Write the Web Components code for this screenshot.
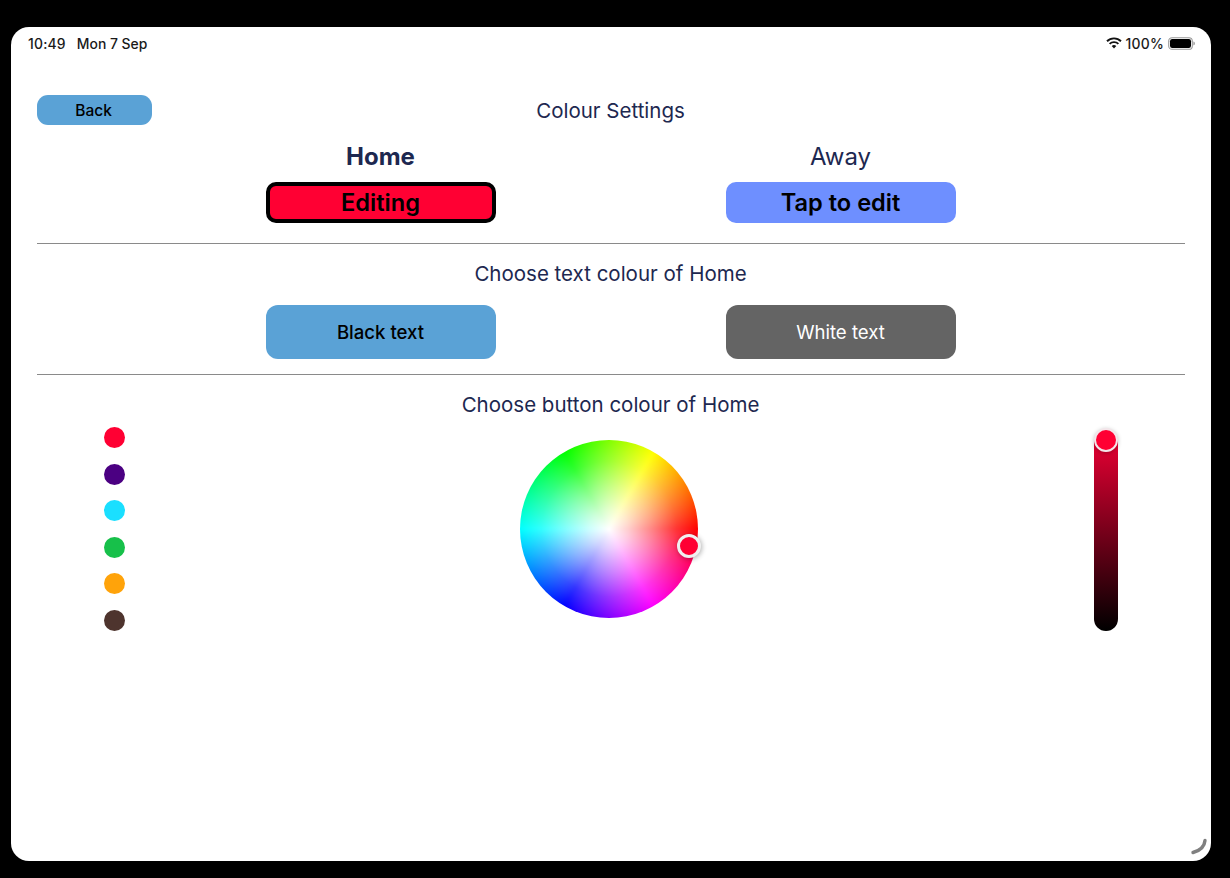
<!DOCTYPE html>
<html lang="en">
<head>
<meta charset="utf-8">
<title>Colour Settings</title>
<style>
  html, body { margin: 0; height: 100%; background: #000; }
  body { font-family: Inter, "Liberation Sans", sans-serif; color: #1d2850; }
</style>
</head>
<body>
<settings-screen>
  <status-bar slot="status"></status-bar>
  <screen-header slot="header">Colour Settings</screen-header>

  <team-row slot="teams">
    <team-column name="Home" selected>
      <app-button kind="editing">Editing</app-button>
    </team-column>
    <team-column name="Away">
      <app-button kind="away">Tap to edit</app-button>
    </team-column>
  </team-row>

  <section-title slot="text-title">Choose text colour of Home</section-title>
  <team-row slot="text-buttons">
    <app-button kind="black">Black text</app-button>
    <app-button kind="white">White text</app-button>
  </team-row>

  <section-title slot="colour-title">Choose button colour of Home</section-title>
  <colour-picker slot="picker"></colour-picker>
</settings-screen>

<script>
function defineEl(name, css, html, extra) {
    const tpl = document.createElement('template');
    tpl.innerHTML = `<style>${css}</style>${html}`;
    customElements.define(name, class extends HTMLElement {
        constructor() {
            super();
            this.attachShadow({ mode: 'open' }).appendChild(tpl.content.cloneNode(true));
        }
        connectedCallback() {
            if (extra) extra(this);
        }
    });
}

defineEl('settings-screen', `
    :host { display: block; padding: 27px 19px 17px 11px; }
    .device {
        position: relative;
        box-sizing: border-box;
        width: 1200px;
        height: 834px;
        background: #fff;
        border-radius: 18px;
        overflow: hidden;
    }
    .content { padding: 0 26px; }
    hr { border: 0; height: 1px; background: #8a8a8a; margin: 0; }
    .rule-1 { margin-top: 20px; }
    .rule-2 { margin-top: 15px; }
    .gap-a { height: 18px; }
    .resize { position: absolute; right: 0; bottom: 0; }
`, `
    <div class="device">
        <slot name="status"></slot>
        <div class="content">
            <slot name="header"></slot>
            <slot name="teams"></slot>
            <hr class="rule-1">
            <slot name="text-title"></slot>
            <div class="gap-a"></div>
            <slot name="text-buttons"></slot>
            <hr class="rule-2">
            <slot name="colour-title"></slot>
            <slot name="picker"></slot>
        </div>
        <svg class="resize" width="24" height="24" viewBox="0 0 24 24">
            <path d="M18 3.5C17.5 9.5 13.5 13.5 6 15.5" fill="none" stroke="#808080" stroke-width="3.4" stroke-linecap="round"/>
        </svg>
    </div>
`);

defineEl('status-bar', `
    :host {
        display: flex;
        justify-content: space-between;
        align-items: center;
        box-sizing: border-box;
        height: 32px;
        padding: 1px 15px 0 17px;
        font: 500 13.9px Inter, "Liberation Sans", sans-serif;
        color: #1a1a1a;
    }
    .left { display: flex; gap: 11px; }
    .left span:first-child { letter-spacing: .2px; }
    .right { display: flex; align-items: center; gap: 4px; }
    .right svg { margin-top: -1px; }
    .pct { letter-spacing: .25px; }
`, `
    <div class="left"><span>10:49</span><span>Mon 7 Sep</span></div>
    <div class="right">
        <svg width="16" height="12" viewBox="0 0 16 12">
            <path d="M1 4.2a10 10 0 0 1 14 0" fill="none" stroke="#111" stroke-width="1.9"/>
            <path d="M3.6 6.9a6.4 6.4 0 0 1 8.8 0" fill="none" stroke="#111" stroke-width="1.9"/>
            <path d="M8 11.4 5.7 9a3.3 3.3 0 0 1 4.6 0z" fill="#111"/>
        </svg>
        <span class="pct">100%</span>
        <svg width="28" height="13" viewBox="0 0 28 13">
            <rect x="0.7" y="0.7" width="23.6" height="11.6" rx="3.4" fill="none" stroke="#999" stroke-width="1.1"/>
            <rect x="2" y="2" width="21" height="9" rx="2.2" fill="#000"/>
            <path d="M25.4 4.6c1 .3 1.5 1 1.5 1.9s-.5 1.6-1.5 1.9z" fill="#999"/>
        </svg>
    </div>
`);

defineEl('screen-header', `
    :host {
        display: grid;
        grid-template-columns: 115px 1fr 115px;
        align-items: center;
        margin: 36px 0 0 -.5px;
        height: 30px;
    }
    .title { text-align: center; padding-right: .5px; font: 400 20.5px Inter, "Liberation Sans", sans-serif; color: #1d2850; }
    app-button { --btn-h: 30px; --btn-radius: 11px; --btn-size: 15.5px; --btn-weight: 500; }
`, `
    <app-button kind="back">Back</app-button>
    <div class="title"><slot></slot></div>
`);

defineEl('team-row', `
    :host {
        display: grid;
        grid-template-columns: 230px 230px;
        justify-content: center;
        column-gap: 230px;
    }
`, `<slot></slot>`);

defineEl('team-column', `
    :host {
        display: block;
        text-align: center;
        margin-top: 18px;
        --btn-h: 41px;
        --btn-size: 23.6px;
        --btn-weight: 600;
        --btn-radius: 10px;
    }
    .name {
        height: 27px;
        margin-bottom: 12px;
        padding-right: 1px;
        font: 400 24px/27px Inter, "Liberation Sans", sans-serif;
        color: #1d2850;
    }
    :host([selected]) .name { font-weight: 700; }
`, `
    <div class="name"></div>
    <slot></slot>
`, el => {
    el.shadowRoot.querySelector('.name').textContent = el.getAttribute('name');
});

defineEl('app-button', `
    :host { display: block; }
    .btn {
        box-sizing: border-box;
        display: flex;
        align-items: center;
        justify-content: center;
        height: var(--btn-h, 54px);
        padding-right: 1px;
        border-radius: var(--btn-radius, 12px);
        font: var(--btn-weight, 500) var(--btn-size, 18.6px) Inter, "Liberation Sans", sans-serif;
        color: #000;
    }
    :host([kind="back"]) .btn, :host([kind="black"]) .btn { background: #5aa2d6; }
    :host([kind="editing"]) .btn { background: #ff0033; border: 4px solid #000; }
    :host([kind="away"]) .btn { background: #6e8fff; }
    :host([kind="white"]) .btn { background: #646464; color: #fff; font-weight: 400; }
`, `<div class="btn"><slot></slot></div>`);

defineEl('section-title', `
    :host {
        display: block;
        height: 27px;
        margin-top: 16px;
        padding-right: 1px;
        text-align: center;
        font: 400 20.5px/27px Inter, "Liberation Sans", sans-serif;
        color: #1d2850;
    }
`, `<slot></slot>`);

defineEl('colour-picker', `
    :host {
        display: grid;
        grid-template-columns: 483px 178px 1fr 24px;
        padding: 0 67px 0 0;
        align-items: start;
    }
    colour-wheel { margin-top: 22px; }
    shade-slider { grid-column: 4; margin-top: 12px; }
`, `
    <swatch-list></swatch-list>
    <colour-wheel></colour-wheel>
    <shade-slider></shade-slider>
`);

defineEl('swatch-list', `
    :host {
        display: flex;
        flex-direction: column;
        gap: 15.6px;
        padding: 9px 0 0 67px;
    }
    i { display: block; width: 21px; height: 21px; border-radius: 50%; }
`, `
    <i style="background:#ff0033"></i>
    <i style="background:#4b0082"></i>
    <i style="background:#1adfff"></i>
    <i style="background:#17c04a"></i>
    <i style="background:#ffa30a"></i>
    <i style="background:#4e342e"></i>
`);

defineEl('colour-wheel', `
    :host { display: block; position: relative; width: 178px; height: 178px; }
    .disc {
        position: relative;
        width: 100%;
        height: 100%;
        border-radius: 50%;
        overflow: hidden;
        background: #fff;
    }
    .hue {
        position: absolute;
        inset: -6px;
        filter: blur(1.5px);
        background: conic-gradient(from 30deg, #ff0 0deg, #f00 60deg, #f0f 120deg, #00f 180deg, #0ff 240deg, #0f0 300deg, #ff0 360deg);
    }
    .white {
        position: absolute;
        inset: 0;
        background: radial-gradient(circle closest-side, #fff 0%, rgba(255,255,255,.8) 22%, rgba(255,255,255,.52) 48%, rgba(255,255,255,.2) 76%, rgba(255,255,255,0) 100%);
    }
    .thumb {
        position: absolute;
        left: 157px;
        top: 94px;
        box-sizing: border-box;
        width: 24px;
        height: 24px;
        border-radius: 50%;
        background: #ff0033;
        border: 3px solid #f0f0f0;
        box-shadow: 1px 1px 5px rgba(0,0,0,.3);
    }
`, `
    <div class="disc"><div class="hue"></div><div class="white"></div></div>
    <div class="thumb"></div>
`);

defineEl('shade-slider', `
    :host { display: block; position: relative; width: 24px; height: 201px; }
    .track {
        height: 100%;
        border-radius: 12px;
        background: linear-gradient(#ff0033 0%, #d90030 10%, #000 100%);
    }
    .thumb {
        position: absolute;
        left: 0;
        top: -2px;
        box-sizing: border-box;
        width: 24px;
        height: 24px;
        border-radius: 50%;
        background: #ff0033;
        border: 2px solid #f4e6ea;
        box-shadow: 0 1px 4px rgba(0,0,0,.25);
    }
`, `
    <div class="track"></div>
    <div class="thumb"></div>
`);
</script>
</body>
</html>
